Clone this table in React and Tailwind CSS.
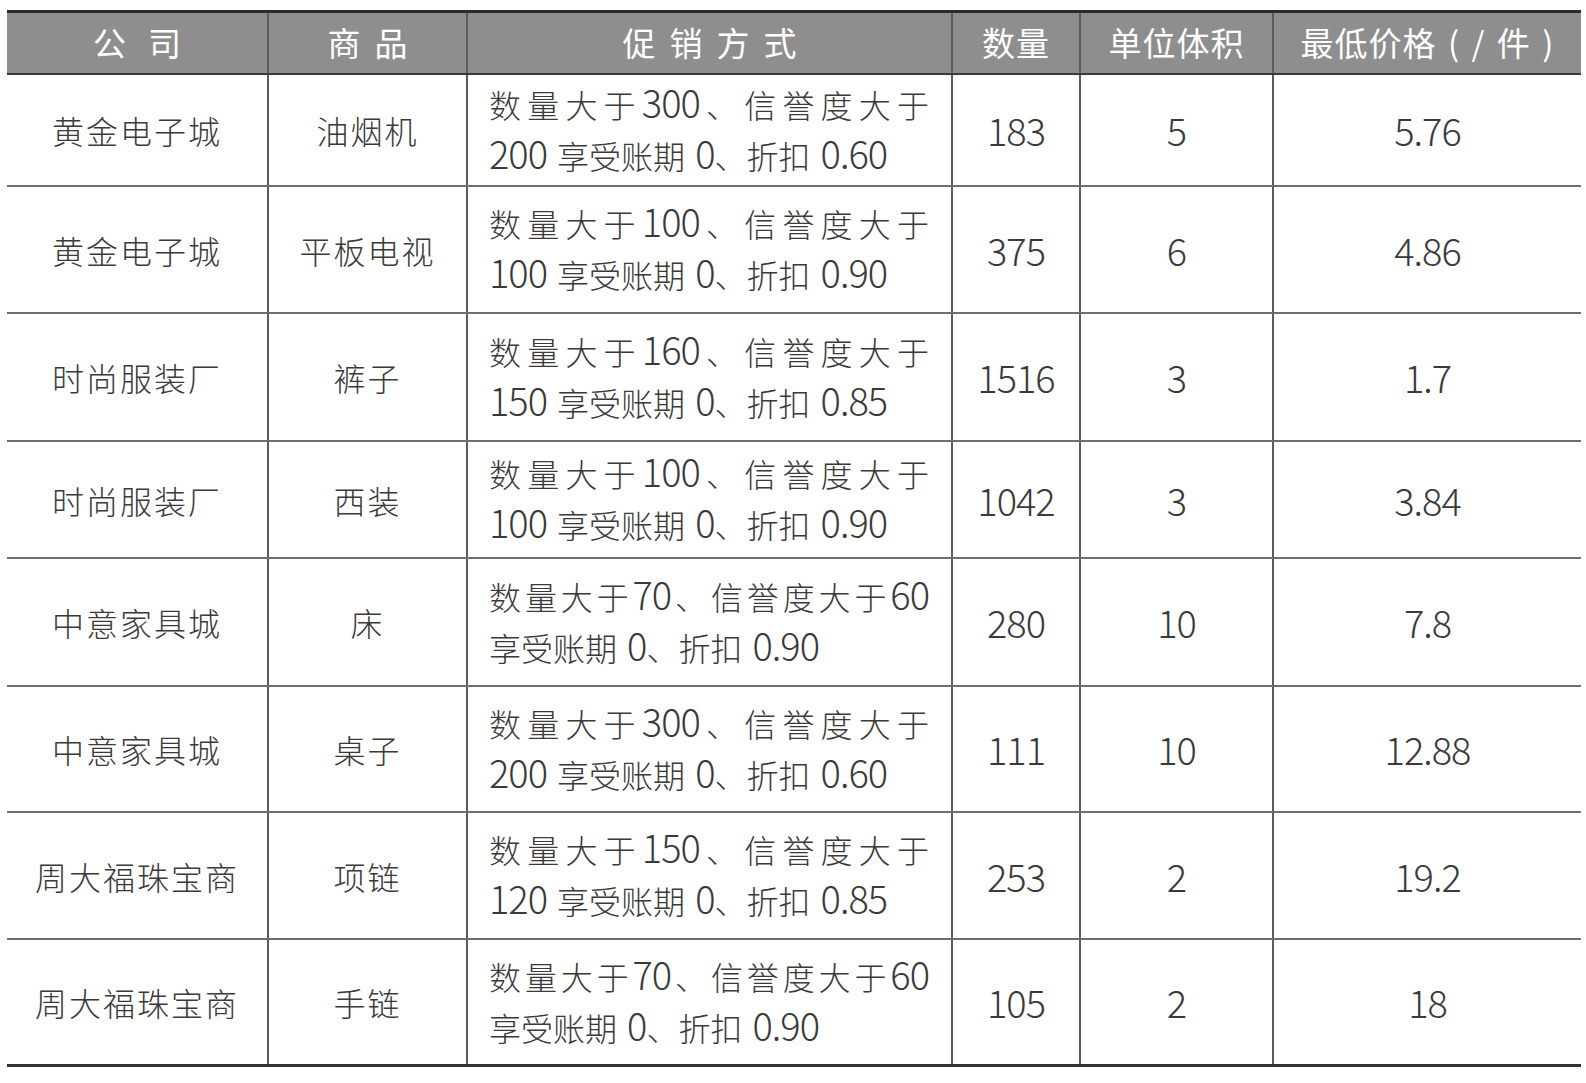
import React from 'react';

const COLS = 'grid grid-cols-[260px_199px_485px_128px_193px_309px]';

const rows = [
  ['黄金电子城', '油烟机', ['数量大于300、信誉度大于', '200 享受账期 0、折扣 0.60'], '183', '5', '5.76', 'h-[112px]'],
  ['黄金电子城', '平板电视', ['数量大于100、信誉度大于', '100 享受账期 0、折扣 0.90'], '375', '6', '4.86', 'h-[127px]'],
  ['时尚服装厂', '裤子', ['数量大于160、信誉度大于', '150 享受账期 0、折扣 0.85'], '1516', '3', '1.7', 'h-[128px]'],
  ['时尚服装厂', '西装', ['数量大于100、信誉度大于', '100 享受账期 0、折扣 0.90'], '1042', '3', '3.84', 'h-[117px]'],
  ['中意家具城', '床', ['数量大于70、信誉度大于60', '享受账期 0、折扣 0.90'], '280', '10', '7.8', 'h-[128px]'],
  ['中意家具城', '桌子', ['数量大于300、信誉度大于', '200 享受账期 0、折扣 0.60'], '111', '10', '12.88', 'h-[126px]'],
  ['周大福珠宝商', '项链', ['数量大于150、信誉度大于', '120 享受账期 0、折扣 0.85'], '253', '2', '19.2', 'h-[127px]'],
  ['周大福珠宝商', '手链', ['数量大于70、信誉度大于60', '享受账期 0、折扣 0.90'], '105', '2', '18', 'h-[127px]'],
];

// digits in the source are taller and narrower than the CJK face's, so split them out
function Mixed({ text }) {
  return text.split(/([0-9.]+)/).map((p, i) =>
    /[0-9]/.test(p) ? (
      <span key={i} className="text-[38px] tracking-[-1px] leading-none">
        {p}
      </span>
    ) : (
      p
    )
  );
}

function Cell({ children, first, className = '' }) {
  return (
    <div
      className={`flex items-center justify-center ${first ? '' : 'border-l-2 border-[#5c5c5c]'} ${className}`}
    >
      {children}
    </div>
  );
}

export default function App() {
  return (
    <div className="min-h-screen bg-white pt-[10px] pl-[7px] font-['Noto_Sans_CJK_SC',sans-serif]">
      <div className="w-[1574px] border-t-[3px] border-[#2b2b2b]">
        <div className={`${COLS} h-[62px] bg-[#8e8e8e] border-b-2 border-[#3a3a3a] text-white text-[33px] font-normal`}>
          <Cell first className="tracking-[22px] pl-[22px]">公司</Cell>
          <Cell className="tracking-[14px] pl-[14px]">商品</Cell>
          <Cell className="tracking-[14px] pl-[14px]">促销方式</Cell>
          <Cell className="tracking-[1px]">数量</Cell>
          <Cell className="tracking-[1px]">单位体积</Cell>
          <Cell className="tracking-[1px] [word-spacing:3px]">最低价格 ( / 件 )</Cell>
        </div>

        {rows.map((r, idx) => (
          <div
            key={idx}
            className={`${COLS} ${r[6]} ${
              idx === rows.length - 1 ? 'border-b-[3px] border-[#333333]' : 'border-b-2 border-[#6e6e6e]'
            } text-[32px] font-light text-[#3a3a3a]`}
          >
            <Cell first className="tracking-[2px]">{r[0]}</Cell>
            <Cell className="tracking-[2px]">{r[1]}</Cell>
            <Cell className="!justify-start pl-[21px] pr-[22px]">
              <div className="w-full leading-[51px] -mt-[1px]">
                <div className="text-justify [text-align-last:justify]">
                  <Mixed text={r[2][0]} />
                </div>
                <div className="[word-spacing:3px]">
                  <Mixed text={r[2][1]} />
                </div>
              </div>
            </Cell>
            <Cell><Mixed text={r[3]} /></Cell>
            <Cell><Mixed text={r[4]} /></Cell>
            <Cell><Mixed text={r[5]} /></Cell>
          </div>
        ))}
      </div>
    </div>
  );
}
